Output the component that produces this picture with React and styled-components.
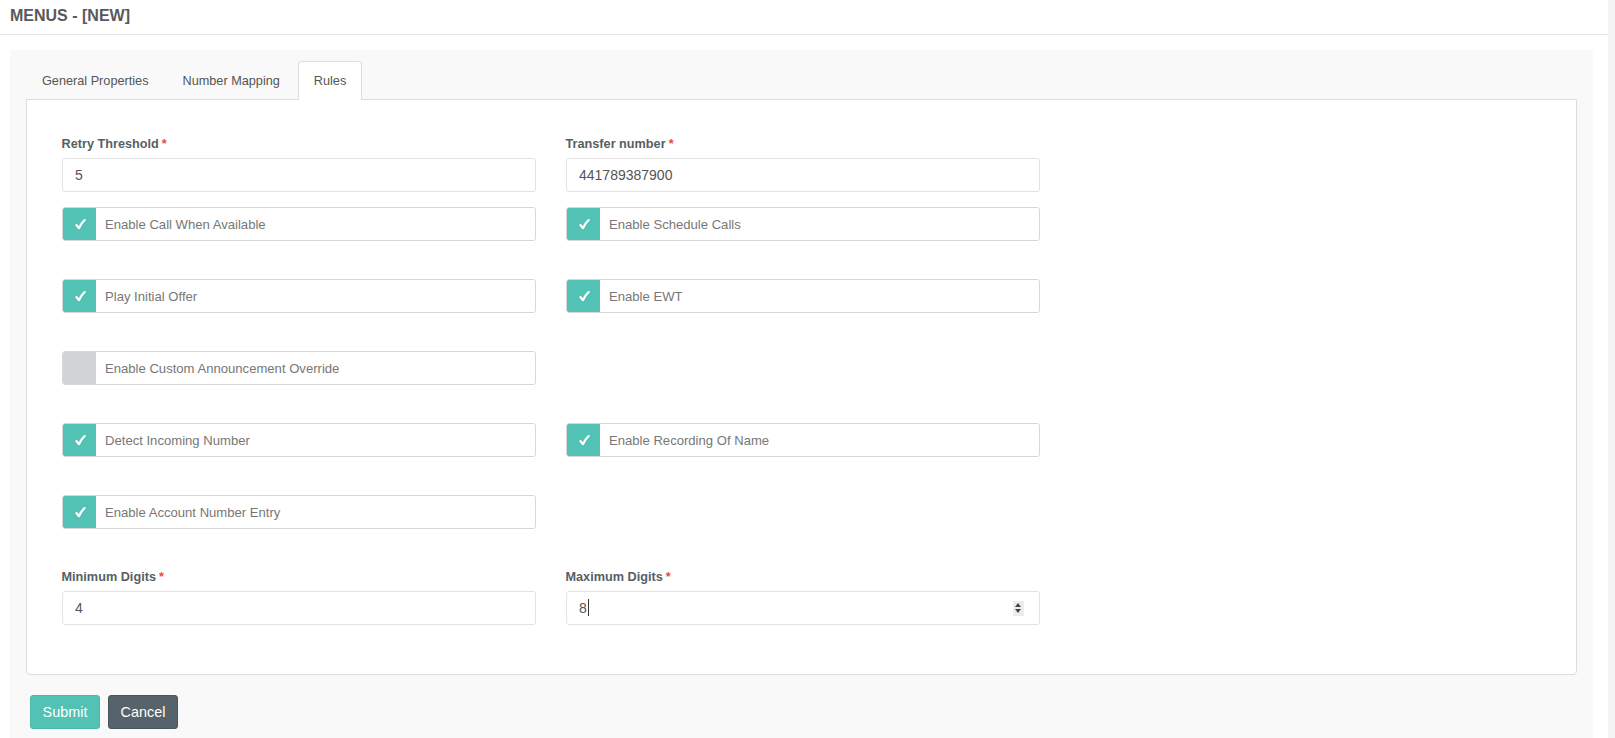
import React from 'react';
import styled, { createGlobalStyle } from 'styled-components';

const teal = `#52c2b4`;
const slate = `#56636b`;
const borderGrey = `#dddddd`;
const textGrey = `#555`;

const GlobalStyle = createGlobalStyle`
  html, body {
    margin: 0;
    padding: 0;
    background: #fff;
    font-family: "Liberation Sans", Arial, sans-serif;
    color: ${textGrey};
  }
  * { box-sizing: border-box; }
`;

const Page = styled.div`
  display: flex;
  width: 1615px;
  height: 738px;
  overflow: hidden;
`;

const Main = styled.div`
  flex: 1;
  display: flex;
  flex-direction: column;
`;

const ScrollTrack = styled.div`
  width: 7px;
  background: #f3f3f3;
`;

const Header = styled.div`
  height: 35px;
  border-bottom: 1px solid #e4e4e4;
  padding: 7px 10px 0;
  font-size: 16px;
  font-weight: 700;
  color: #58595b;
`;

const Panel = styled.div`
  margin: 15px 0 0 10px;
  width: 1583px;
  flex: 1;
  background: #f9f9f9;
  padding: 11px 16px 0 16px;
`;

const TabBar = styled.div`
  display: flex;
  height: 38px;
`;

const Tab = styled.div`
  padding: 12px 15px 0;
  height: 39px;
  font-size: 12.7px;
  color: ${textGrey};
  border: 1px solid ${(p) => (p.$active ? borderGrey : 'transparent')};
  border-bottom: none;
  border-radius: 4px 4px 0 0;
  background: ${(p) => (p.$active ? '#fff' : 'transparent')};
  margin-right: 2px;
  position: relative;
  z-index: 1;
`;

const TabContent = styled.div`
  background: #fff;
  border: 1px solid ${borderGrey};
  border-radius: 0 0 4px 4px;
  height: 576px;
  padding: 36px 34.5px 0;
`;

const Row = styled.div`
  display: grid;
  grid-template-columns: 474px 474px;
  column-gap: 30px;
  margin-top: ${(p) => p.$gap || 0}px;
`;

const Field = styled.div`
  display: flex;
  flex-direction: column;
`;

const Label = styled.label`
  font-size: 12.7px;
  font-weight: 700;
  line-height: 16.5px;
  color: #575f66;
  margin-bottom: 5.5px;
`;

const Required = styled.span`
  color: #e74c3c;
  margin-left: 3px;
`;

const TextInput = styled.input`
  height: 34px;
  width: 100%;
  border: 1px solid #e2e2e2;
  border-radius: 3px;
  padding: 0 12.5px;
  font-family: inherit;
  font-size: 14px;
  color: ${textGrey};
  outline: none;
  background: #fff;
`;

const FocusBox = styled.div`
  position: relative;
  height: 34px;
  border: 1px solid #e2e2e2;
  border-radius: 3px;
  padding: 0 12.5px;
  display: flex;
  align-items: center;
  font-size: 14px;
  color: ${textGrey};
`;

const Caret = styled.span`
  display: inline-block;
  width: 1px;
  height: 17px;
  background: #333;
  margin-left: 1px;
`;

const Spinner = styled.span`
  position: absolute;
  right: 15px;
  top: 9px;
  width: 11px;
  height: 15px;
  background: #ececec;
  display: flex;
  flex-direction: column;
  align-items: center;
  justify-content: center;
  gap: 2px;
`;

const Arrow = styled.span`
  width: 0;
  height: 0;
  border-left: 3.5px solid transparent;
  border-right: 3.5px solid transparent;
  ${(p) => (p.$down ? 'border-top' : 'border-bottom')}: 4px solid #444;
`;

const CheckRow = styled.div`
  display: flex;
  height: 34px;
  border: 1px solid #d8d8d8;
  border-radius: 3px;
  overflow: hidden;
  background: #fff;
`;

const CheckBox = styled.div`
  width: 33px;
  flex: none;
  background: ${(p) => (p.$on ? teal : '#d2d3d5')};
  display: flex;
  align-items: center;
  justify-content: center;
  padding-left: 2px;
`;

const CheckText = styled.div`
  display: flex;
  align-items: center;
  padding-left: 9.5px;
  font-size: 13.1px;
  color: #777;
`;

const Actions = styled.div`
  display: flex;
  gap: 8px;
  margin: 20px 0 0 4px;
`;

const Button = styled.button`
  height: 34px;
  width: 70px;
  padding: 0;
  border: 1px solid ${(p) => (p.$primary ? '#4bb8aa' : '#4a565e')};
  border-radius: 3px;
  background: ${(p) => (p.$primary ? teal : slate)};
  color: #fff;
  font-family: inherit;
  font-size: 14.4px;
`;

function Tick() {
  return (
    <svg width="11" height="11" viewBox="0 0 11 11">
      <path d="M1.4 6 L4 9.2 Q5.8 4.6 9.6 1" fill="none" stroke="#fff" strokeWidth="2.2" strokeLinecap="round" strokeLinejoin="round" />
    </svg>
  );
}

function Toggle({ label, on = true }) {
  return (
    <CheckRow>
      <CheckBox $on={on}>{on && <Tick />}</CheckBox>
      <CheckText>{label}</CheckText>
    </CheckRow>
  );
}

const toggleRows = [
  ['Enable Call When Available', 'Enable Schedule Calls'],
  ['Play Initial Offer', 'Enable EWT'],
  ['Enable Custom Announcement Override', null, false],
  ['Detect Incoming Number', 'Enable Recording Of Name'],
  ['Enable Account Number Entry', null],
];

export default function App() {
  return (
    <Page>
      <GlobalStyle />
      <Main>
        <Header>MENUS - [NEW]</Header>
        <Panel>
          <TabBar>
            <Tab>General Properties</Tab>
            <Tab>Number Mapping</Tab>
            <Tab $active>Rules</Tab>
          </TabBar>
          <TabContent>
            <Row>
              <Field>
                <Label>Retry Threshold<Required>*</Required></Label>
                <TextInput readOnly value="5" />
              </Field>
              <Field>
                <Label>Transfer number<Required>*</Required></Label>
                <TextInput readOnly value="441789387900" />
              </Field>
            </Row>
            {toggleRows.map(([left, right, leftOn], i) => (
              <Row key={left} $gap={i === 0 ? 15 : 38}>
                <Toggle label={left} on={leftOn !== false} />
                {right ? <Toggle label={right} /> : <div />}
              </Row>
            ))}
            <Row $gap={39.5}>
              <Field>
                <Label>Minimum Digits<Required>*</Required></Label>
                <TextInput readOnly value="4" />
              </Field>
              <Field>
                <Label>Maximum Digits<Required>*</Required></Label>
                <FocusBox>
                  8<Caret />
                  <Spinner>
                    <Arrow />
                    <Arrow $down />
                  </Spinner>
                </FocusBox>
              </Field>
            </Row>
          </TabContent>
          <Actions>
            <Button $primary>Submit</Button>
            <Button>Cancel</Button>
          </Actions>
        </Panel>
      </Main>
      <ScrollTrack />
    </Page>
  );
}
